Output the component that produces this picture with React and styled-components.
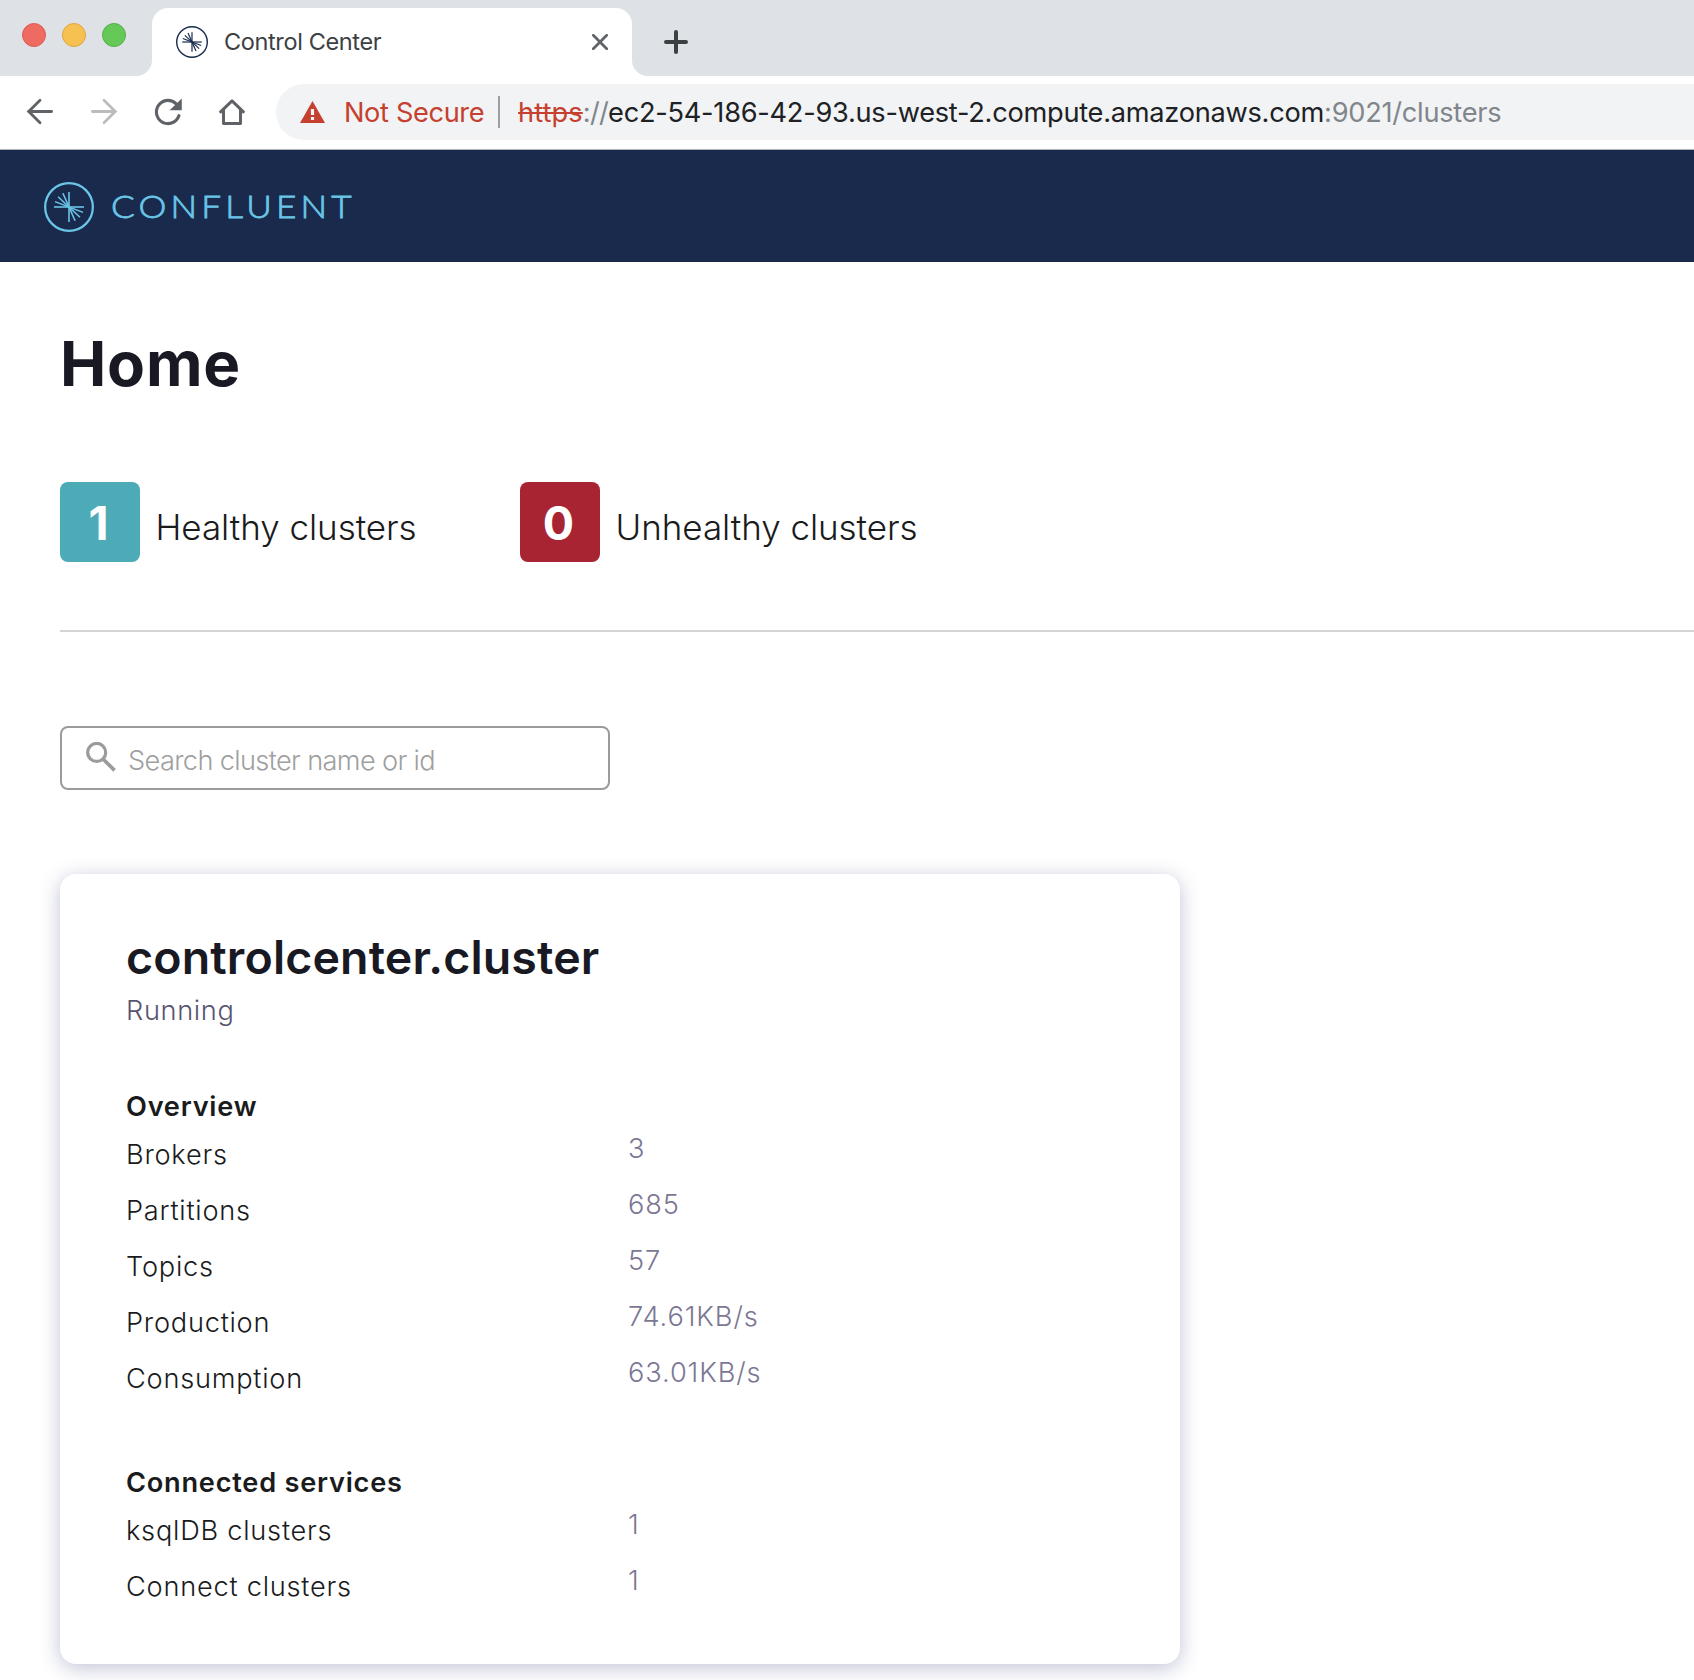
import React from "react";
import styled, { createGlobalStyle } from "styled-components";

const GlobalStyle = createGlobalStyle`
  *, *::before, *::after { box-sizing: border-box; }
  html, body { margin: 0; background: #fff; }
  body {
    font-family: Inter, "Liberation Sans", sans-serif;
    color: #1a1b1c;
    overflow: hidden;
  }
`;

const Window = styled.div`
  height: 1680px;
  overflow: hidden;
  background: #fff;
`;

/* Browser chrome */

const TabStrip = styled.div`
  display: flex;
  height: 76px;
  background: #dee1e6;
`;

const TrafficLights = styled.div`
  display: flex;
  gap: 16px;
  width: 152px;
  padding: 23px 0 0 22px;
`;

const Light = styled.span`
  width: 24px;
  height: 24px;
  border-radius: 50%;
  background: ${(p) => p.$fill};
  border: 1px solid ${(p) => p.$edge};
`;

const Tab = styled.div`
  position: relative;
  display: flex;
  align-items: center;
  width: 480px;
  height: 68px;
  margin-top: 8px;
  padding: 0 24px;
  background: #fff;
  border-radius: 16px 16px 0 0;

  &::before,
  &::after {
    content: "";
    position: absolute;
    bottom: 0;
    width: 16px;
    height: 16px;
  }
  &::before {
    left: -16px;
    background: radial-gradient(circle at 0 0, transparent 15.5px, #fff 16.5px);
  }
  &::after {
    right: -16px;
    background: radial-gradient(circle at 100% 0, transparent 15.5px, #fff 16.5px);
  }
`;

const TabTitle = styled.span`
  flex: 1;
  margin-left: 16px;
  font-size: 23.5px;
  line-height: 68px;
  letter-spacing: -0.37px;
  color: #3c4043;
`;

const NewTab = styled.div`
  display: flex;
  margin: 28px 0 0 30px;
`;

const Toolbar = styled.div`
  display: flex;
  align-items: flex-start;
  height: 74px;
  padding: 8px 0 0 24px;
  border-bottom: 1px solid #b1b3b5;
`;

const NavButtons = styled.div`
  display: flex;
  align-items: center;
  gap: 32px;
  height: 56px;
  margin-right: 28px;
`;

const AddressBar = styled.div`
  flex: 1;
  display: flex;
  align-items: center;
  height: 56px;
  padding-left: 24px;
  background: #f1f3f4;
  border-radius: 28px 0 0 28px;
  font-size: 27.2px;
  line-height: 54px;
  white-space: nowrap;
`;

const Warning = styled.span`
  margin-left: 19px;
  padding-top: 2px;
  color: #c5402f;
  letter-spacing: -0.36px;
`;

const Separator = styled.span`
  width: 2px;
  height: 32px;
  margin: 0 18.5px 0 13.3px;
  background: #9c9ea1;
`;

const Url = styled.span`
  padding-top: 2px;
  color: #202124;
  letter-spacing: -0.26px;
`;

const Scheme = styled.span`
  color: #c5402f;
  letter-spacing: 0.1px;
  text-decoration: line-through;
  text-decoration-thickness: 2px;
`;

const Muted = styled.span`
  color: #80868b;
  letter-spacing: ${(p) => (p.$tight ? "-0.7px" : "inherit")};
`;

/* Application */

const Header = styled.header`
  display: flex;
  align-items: center;
  height: 112px;
  padding: 2px 0 0 44px;
  background: #192a4d;
`;

const Wordmark = styled.span`
  margin: 0 0 2px 16.8px;
  font-family: Lato, "Liberation Sans", sans-serif;
  font-weight: 300;
  font-size: 31.8px;
  line-height: 40px;
  letter-spacing: 3.8px;
  color: #6ac5e6;
  -webkit-text-stroke: 0.8px #6ac5e6;
  transform: scaleX(1.105);
  transform-origin: left;
`;

const Main = styled.main`
  padding: 62px 0 0 60px;
`;

const Title = styled.h1`
  margin: 0;
  font-size: 62px;
  font-weight: 700;
  line-height: 80px;
  letter-spacing: 0.8px;
  color: #191924;
`;

const Stats = styled.section`
  display: flex;
  height: 150px;
  margin-top: 78px;
  border-bottom: 2px solid #d4d4d5;
`;

const Stat = styled.div`
  display: flex;
  width: 460px;
`;

const Badge = styled.span`
  width: 80px;
  height: 80px;
  padding-right: 3px;
  border-radius: 8px;
  background: ${(p) => p.$color};
  color: #fff;
  font-size: 46.5px;
  font-weight: 700;
  line-height: 82px;
  text-align: center;
`;

const StatLabel = styled.span`
  margin-left: 15.5px;
  padding-top: 5px;
  font-size: 35px;
  font-weight: 300;
  line-height: 80px;
  letter-spacing: -0.05px;
`;

const SearchBox = styled.div`
  display: flex;
  align-items: flex-start;
  width: 550px;
  height: 64px;
  margin-top: 94px;
  padding: 14px 0 0 23px;
  border: 2px solid #9b9b9b;
  border-radius: 8px;
`;

const Placeholder = styled.span`
  margin: 1px 0 0 11px;
  font-size: 27.2px;
  font-weight: 300;
  line-height: 36px;
  letter-spacing: -0.65px;
  color: #9f9f9f;
`;

const Card = styled.article`
  width: 1120px;
  height: 790px;
  margin-top: 84px;
  padding: 53px 66px 0;
  border-radius: 16px;
  background: #fff;
  box-shadow: 0 4px 20px rgba(48, 55, 112, 0.3);
`;

const ClusterName = styled.h2`
  margin: 0;
  font-size: 46.5px;
  font-weight: 600;
  line-height: 60px;
  letter-spacing: 0.15px;
  color: #191924;
`;

const Status = styled.p`
  margin: 4px 0 0;
  font-size: 27.2px;
  font-weight: 300;
  line-height: 40px;
  letter-spacing: 0.65px;
  color: #57546f;
`;

const Group = styled.section`
  margin-top: 56px;
`;

const GroupTitle = styled.h3`
  margin: 0;
  font-size: 27.2px;
  font-weight: 600;
  line-height: 40px;
  letter-spacing: 0.75px;
`;

const Row = styled.div`
  display: grid;
  grid-template-columns: 502px 1fr;
  height: 56px;
  font-size: 27.2px;
  font-weight: 300;
`;

const Label = styled.span`
  line-height: 56px;
  letter-spacing: 0.76px;
`;

const Value = styled.span`
  line-height: 44px;
  letter-spacing: 0.9px;
  color: #7b7794;
`;

const rays = [0, 21, 43, 66, 90];

const Mark = ({ size, color, stroke, ray, reach }) => {
  const c = size / 2;
  return (
    <svg width={size} height={size} viewBox={`0 0 ${size} ${size}`} fill="none" stroke={color}>
      <circle cx={c} cy={c} r={c - stroke / 2} strokeWidth={stroke} />
      {rays.map((deg) => {
        const a = (deg * Math.PI) / 180;
        const dx = Math.cos(a) * reach;
        const dy = Math.sin(a) * reach;
        return (
          <path key={deg} strokeWidth={ray} d={`M${c - dx} ${c - dy}L${c + dx} ${c + dy}`} />
        );
      })}
    </svg>
  );
};

const ArrowIcon = ({ color, flip }) => (
  <svg width="32" height="32" viewBox="0 0 32 32" fill="none" stroke={color} strokeWidth="2.8" strokeLinecap="round" strokeLinejoin="miter">
    <path d={flip ? "M4.4 15.5H27.5M16 4.3L27.3 15.5L16 26.7" : "M27.6 15.5H4.5M16 4.3L4.7 15.5L16 26.7"} />
  </svg>
);

const ReloadIcon = () => (
  <svg width="32" height="32" viewBox="2.25 2.25 19.5 19.5" fill="#5f6368">
    <path d="M17.65 6.35A7.96 7.96 0 0 0 12 4a8 8 0 1 0 7.6 10.5a.95 .95 0 0 0-1.85-.5A6.1 6.1 0 1 1 16.3 7.7L13 11h7.4V3.7z" />
  </svg>
);

const HomeIcon = () => (
  <svg width="32" height="32" viewBox="0 0 32 32" fill="none" stroke="#5f6368" strokeWidth="3" strokeLinejoin="round" strokeLinecap="round">
    <path d="M4.6 15.8L16 4.8L27.4 15.8" />
    <path d="M7.5 14V27.4H24.5V14" />
  </svg>
);

const AlertIcon = () => (
  <svg width="25" height="22" viewBox="0 0 25 22">
    <path d="M12.5 0L25 22H0z" fill="#c5402f" />
    <path d="M10.9 8h3.2v6h-3.2zM10.9 16h3.2v3h-3.2z" fill="#f1f3f4" />
  </svg>
);

const CloseIcon = () => (
  <svg width="16" height="16" viewBox="0 0 16 16" stroke="#5f6368" strokeWidth="2.7" strokeLinecap="round">
    <path d="M1.3 1.3L14.7 14.7M14.7 1.3L1.3 14.7" />
  </svg>
);

const PlusIcon = () => (
  <svg width="32" height="28" viewBox="0 0 32 28" stroke="#3c4043" strokeWidth="4" strokeLinecap="round">
    <path d="M4 14H24M14 4V24" />
  </svg>
);

const SearchIcon = () => (
  <svg width="32" height="32" viewBox="0 0 32 32" fill="none" stroke="#9b9b9b" strokeWidth="3.2">
    <circle cx="11.7" cy="10.4" r="9" />
    <path d="M17.8 16.8L29.6 28.4" strokeWidth="3.6" />
  </svg>
);

const groups = [
  {
    title: "Overview",
    rows: [
      ["Brokers", "3"],
      ["Partitions", "685"],
      ["Topics", "57"],
      ["Production", "74.61KB/s"],
      ["Consumption", "63.01KB/s"],
    ],
  },
  {
    title: "Connected services",
    rows: [
      ["ksqlDB clusters", "1"],
      ["Connect clusters", "1"],
    ],
  },
];

export default function App() {
  return (
    <Window>
      <GlobalStyle />
      <TabStrip>
        <TrafficLights>
          <Light $fill="#ed6b60" $edge="#dc5c51" />
          <Light $fill="#f6c151" $edge="#dfa642" />
          <Light $fill="#65c958" $edge="#54b046" />
        </TrafficLights>
        <Tab>
          <Mark size={32} color="#192a4d" stroke={1.4} ray={1.2} reach={9.8} />
          <TabTitle>Control Center</TabTitle>
          <CloseIcon />
        </Tab>
        <NewTab>
          <PlusIcon />
        </NewTab>
      </TabStrip>
      <Toolbar>
        <NavButtons>
          <ArrowIcon color="#5f6368" />
          <ArrowIcon color="#babcbe" flip />
          <ReloadIcon />
          <HomeIcon />
        </NavButtons>
        <AddressBar>
          <AlertIcon />
          <Warning>Not Secure</Warning>
          <Separator />
          <Url>
            <Scheme>https</Scheme>
            <Muted $tight>://</Muted>
            ec2-54-186-42-93.us-west-2.compute.amazonaws.com
            <Muted>:9021/clusters</Muted>
          </Url>
        </AddressBar>
      </Toolbar>
      <Header>
        <Mark size={50} color="#6ac5e6" stroke={2.3} ray={1.6} reach={15} />
        <Wordmark>CONFLUENT</Wordmark>
      </Header>
      <Main>
        <Title>Home</Title>
        <Stats>
          <Stat>
            <Badge $color="#4dabb8">1</Badge>
            <StatLabel>Healthy clusters</StatLabel>
          </Stat>
          <Stat>
            <Badge $color="#a92432">0</Badge>
            <StatLabel>Unhealthy clusters</StatLabel>
          </Stat>
        </Stats>
        <SearchBox>
          <SearchIcon />
          <Placeholder>Search cluster name or id</Placeholder>
        </SearchBox>
        <Card>
          <ClusterName>controlcenter.cluster</ClusterName>
          <Status>Running</Status>
          {groups.map((group) => (
            <Group key={group.title}>
              <GroupTitle>{group.title}</GroupTitle>
              {group.rows.map(([label, value]) => (
                <Row key={label}>
                  <Label>{label}</Label>
                  <Value>{value}</Value>
                </Row>
              ))}
            </Group>
          ))}
        </Card>
      </Main>
    </Window>
  );
}
